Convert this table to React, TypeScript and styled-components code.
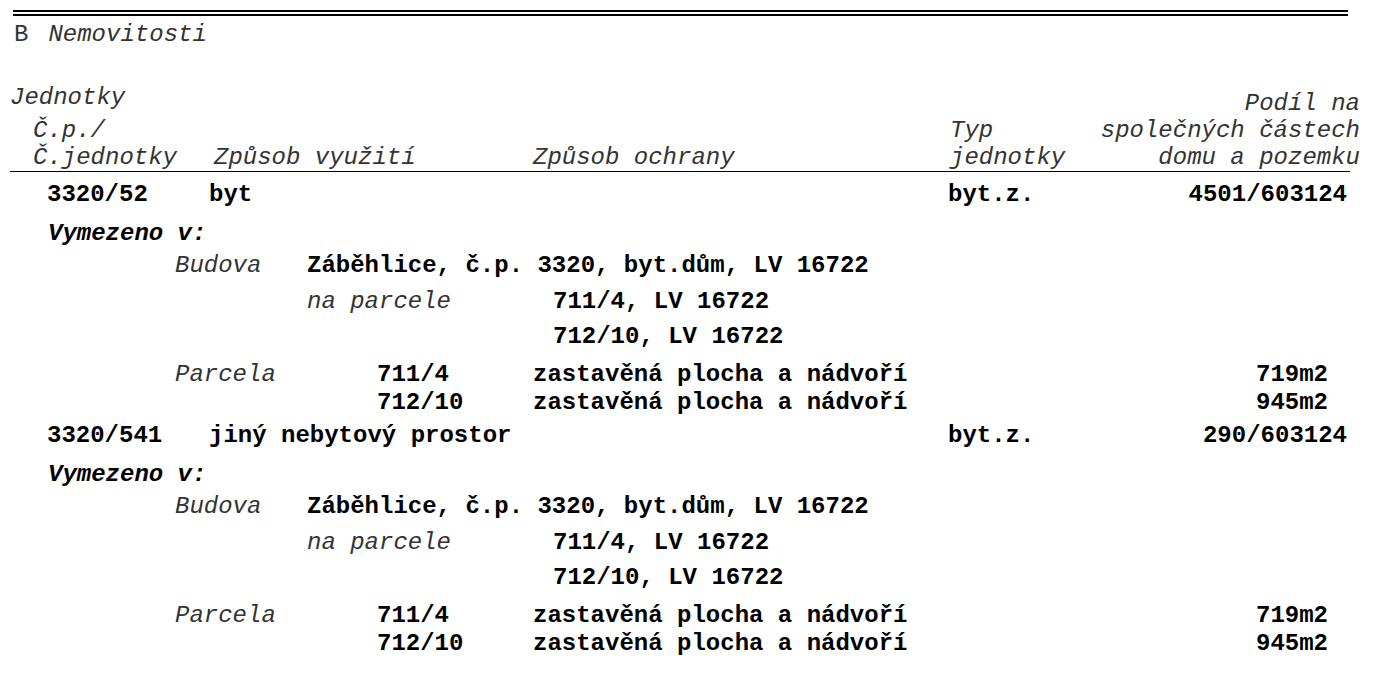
import styled, { createGlobalStyle } from "styled-components";

const GlobalStyle = createGlobalStyle`
  html, body {
    margin: 0;
    padding: 0;
    background: #ffffff;
  }
  body {
    font-family: "Liberation Mono", "Courier New", monospace;
    font-size: 24px;
    color: #000;
  }
`;

const Page = styled.div`
  width: 1380px;
  height: 674px;
  overflow: hidden;
  padding-top: 10px;
  box-sizing: border-box;
`;

const DoubleRule = styled.div`
  margin-left: 13px;
  width: 1335px;
  height: 2px;
  border-top: 2px solid #000;
  border-bottom: 2px solid #000;
`;

const SectionTitle = styled.div`
  display: flex;
  gap: 20px;
  padding-left: 14px;
  margin-top: 5px;
  line-height: 28px;
  color: #333;
`;

const Italic = styled.span`
  font-style: italic;
`;

const Header = styled.div`
  display: flex;
  align-items: flex-end;
  padding-left: 10px;
  margin-top: 35px;
  line-height: 27px;
  font-style: italic;
  color: #333;
`;

const HeaderCell = styled.div<{ $w?: number; $right?: boolean }>`
  display: flex;
  flex-direction: column;
  ${({ $w }) => ($w ? `width: ${$w}px;` : "flex: 1;")}
  ${({ $right }) => ($right ? "text-align: right; padding-right: 20px;" : "")}
  white-space: pre;
`;

const HeaderTop = styled.div`
  margin-bottom: 6px;
`;

const Indented = styled.div`
  padding-left: 23px;
`;

const HeaderRule = styled.div`
  margin-left: 10px;
  width: 1340px;
  height: 0;
  border-top: 1.5px solid #000;
`;

const Body = styled.div`
  padding-top: 9px;
  font-weight: bold;
  line-height: 28px;
`;

const Unit = styled.div`
  margin-bottom: 5px;
`;

const UnitLine = styled.div`
  display: grid;
  grid-template-columns: 162px 739px 1fr auto;
  padding-left: 47px;
  padding-right: 33px;
  white-space: pre;
`;

const DefinedLabel = styled.div`
  margin-top: 11px;
  padding-left: 48px;
  font-style: italic;
`;

const Label = styled.span`
  font-weight: normal;
  font-style: italic;
  color: #333;
`;

const BuildingLine = styled.div`
  display: grid;
  grid-template-columns: 132px 1fr;
  padding-left: 175px;
  margin-top: 4px;
  white-space: pre;
`;

const PlotLine = styled.div<{ $gap: number }>`
  display: grid;
  grid-template-columns: 246px 1fr;
  padding-left: 307px;
  margin-top: ${({ $gap }) => $gap}px;
  white-space: pre;
`;

const ParcelLine = styled.div<{ $gap: number }>`
  display: grid;
  grid-template-columns: 202px 156px 1fr auto;
  padding-left: 175px;
  padding-right: 52px;
  margin-top: ${({ $gap }) => $gap}px;
  white-space: pre;
`;

type Parcel = { no: string; kind: string; area: string };

type UnitData = {
  no: string;
  usage: string;
  type: string;
  share: string;
  building: string;
  plots: string[];
  parcels: Parcel[];
};

const units: UnitData[] = [
  {
    no: "3320/52",
    usage: "byt",
    type: "byt.z.",
    share: "4501/603124",
    building: "Záběhlice, č.p. 3320, byt.dům, LV 16722",
    plots: ["711/4, LV 16722", "712/10, LV 16722"],
    parcels: [
      { no: "711/4", kind: "zastavěná plocha a nádvoří", area: "719m2" },
      { no: "712/10", kind: "zastavěná plocha a nádvoří", area: "945m2" },
    ],
  },
  {
    no: "3320/541",
    usage: "jiný nebytový prostor",
    type: "byt.z.",
    share: "290/603124",
    building: "Záběhlice, č.p. 3320, byt.dům, LV 16722",
    plots: ["711/4, LV 16722", "712/10, LV 16722"],
    parcels: [
      { no: "711/4", kind: "zastavěná plocha a nádvoří", area: "719m2" },
      { no: "712/10", kind: "zastavěná plocha a nádvoří", area: "945m2" },
    ],
  },
];

const UnitBlock: React.FC<{ unit: UnitData }> = ({ unit }) => (
  <Unit>
    <UnitLine>
      <span>{unit.no}</span>
      <span>{unit.usage}</span>
      <span>{unit.type}</span>
      <span>{unit.share}</span>
    </UnitLine>
    <DefinedLabel>Vymezeno v:</DefinedLabel>
    <BuildingLine>
      <Label>Budova</Label>
      <span>{unit.building}</span>
    </BuildingLine>
    {unit.plots.map((p, i) => (
      <PlotLine key={p} $gap={i === 0 ? 8 : 7}>
        <Label>{i === 0 ? "na parcele" : ""}</Label>
        <span>{p}</span>
      </PlotLine>
    ))}
    {unit.parcels.map((p, i) => (
      <ParcelLine key={p.no} $gap={i === 0 ? 10 : 0}>
        <Label>{i === 0 ? "Parcela" : ""}</Label>
        <span>{p.no}</span>
        <span>{p.kind}</span>
        <span>{p.area}</span>
      </ParcelLine>
    ))}
  </Unit>
);

const App = () => (
  <>
    <GlobalStyle />
    <Page>
      <DoubleRule />
      <SectionTitle>
        <span>B</span>
        <Italic>Nemovitosti</Italic>
      </SectionTitle>
      <Header>
        <HeaderCell $w={204}>
          <HeaderTop>Jednotky</HeaderTop>
          <Indented>Č.p./</Indented>
          <Indented>Č.jednotky</Indented>
        </HeaderCell>
        <HeaderCell $w={319}>Způsob využití</HeaderCell>
        <HeaderCell $w={417}>Způsob ochrany</HeaderCell>
        <HeaderCell $w={150}>
          <div>Typ</div>
          <div>jednotky</div>
        </HeaderCell>
        <HeaderCell $right>
          <div>Podíl na</div>
          <div>společných částech</div>
          <div>domu a pozemku</div>
        </HeaderCell>
      </Header>
      <HeaderRule />
      <Body>
        {units.map((u) => (
          <UnitBlock key={u.no} unit={u} />
        ))}
      </Body>
    </Page>
  </>
);

export default App;
